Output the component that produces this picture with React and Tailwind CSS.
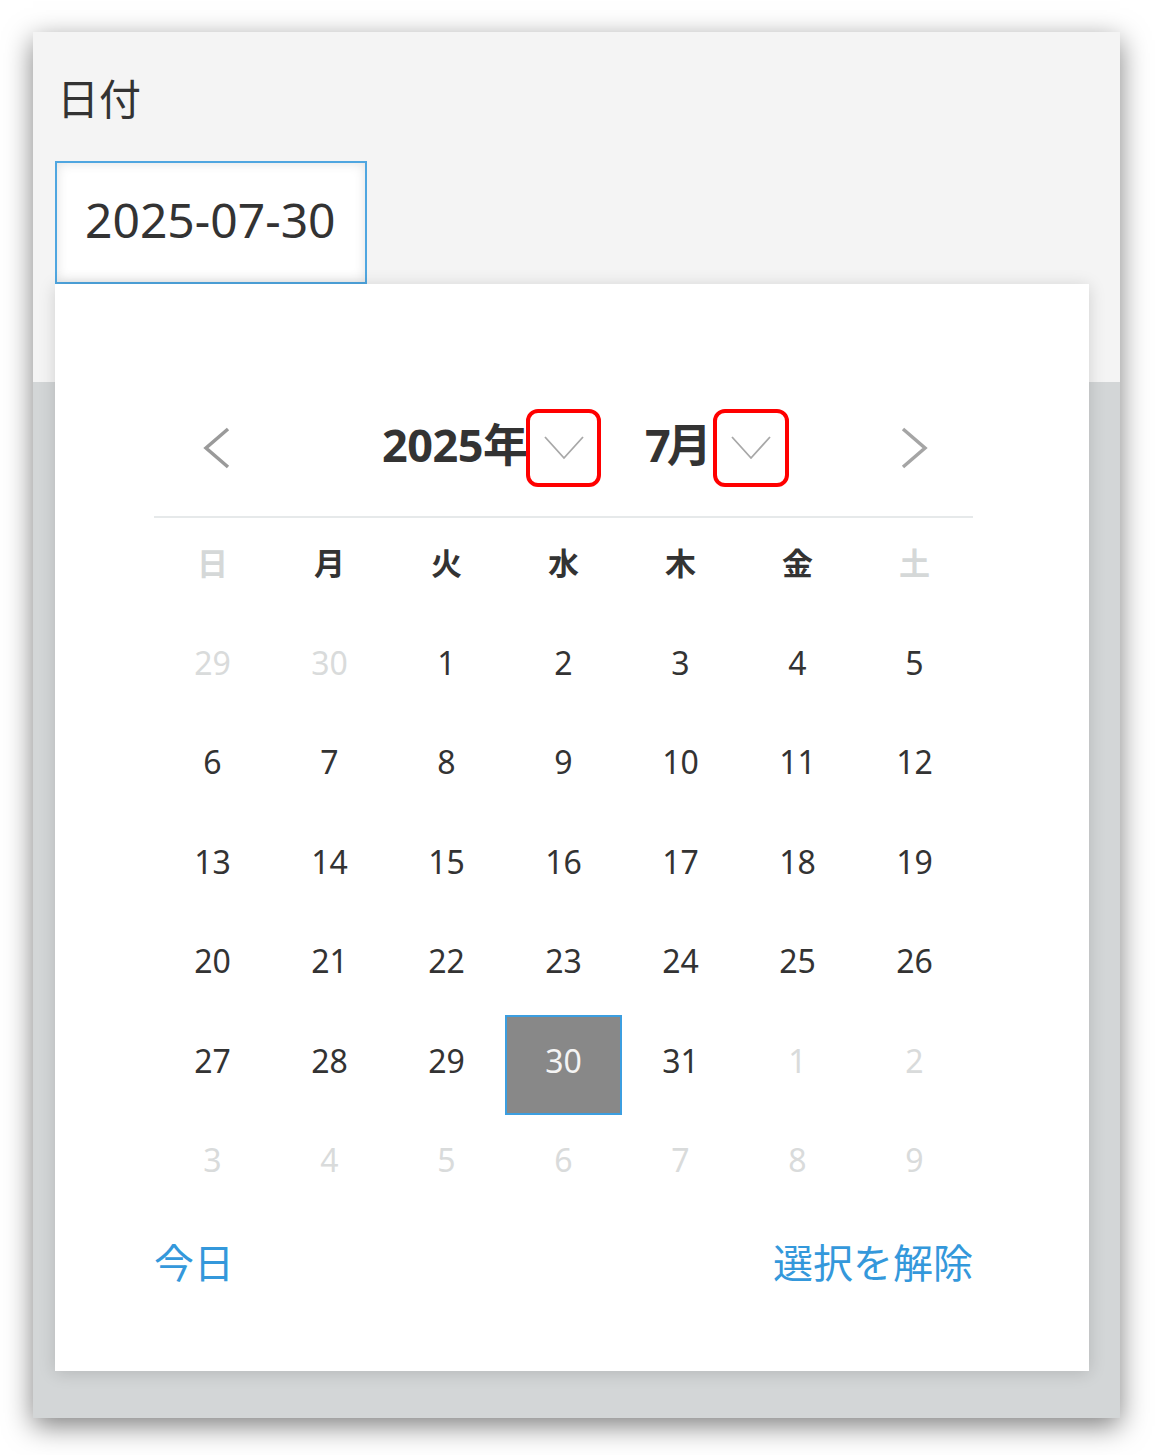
import React from "react";

const weeks = [
  [[29, 1], [30, 1], [1], [2], [3], [4], [5]],
  [[6], [7], [8], [9], [10], [11], [12]],
  [[13], [14], [15], [16], [17], [18], [19]],
  [[20], [21], [22], [23], [24], [25], [26]],
  [[27], [28], [29], [30, 0, 1], [31], [1, 1], [2, 1]],
  [[3, 1], [4, 1], [5, 1], [6, 1], [7, 1], [8, 1], [9, 1]],
];

const weekdays = [
  ["日", true],
  ["月", false],
  ["火", false],
  ["水", false],
  ["木", false],
  ["金", false],
  ["土", true],
];

function Chevron() {
  return (
    <svg width="40" height="26" viewBox="0 0 40 26" className="block">
      <polyline points="1,2 20,23 39,2" fill="none" stroke="#a8a8a8" strokeWidth="1.8" />
    </svg>
  );
}

function RedBox({ w }) {
  return (
    <div className={`${w} h-[78px] border-[4px] border-[#ff0000] rounded-[12px] flex items-center justify-center`}>
      <Chevron />
    </div>
  );
}

export default function App() {
  return (
    <div className="w-[1155px] h-[1455px] bg-white pt-[32px] pl-[33px] font-['Noto_Sans','Noto_Sans_CJK_JP',sans-serif]">
      <div className="relative w-[1087px] h-[1386px] flex flex-col shadow-[0_8px_26px_rgba(0,0,0,0.5)]">
        <div className="h-[350px] bg-[#f4f4f4]">
          <div className="mt-[47px] ml-[24px] h-[40px] leading-[40px] text-[42px] text-[#333]">日付</div>
          <div className="mt-[42px] ml-[22px] w-[312px] h-[123px] border-2 border-[#4fa6e0] bg-white flex items-center pl-[28px] pb-[6px] text-[48px] text-[#333] shadow-[inset_0_0_12px_rgba(0,0,0,0.12)]">
            2025-07-30
          </div>
        </div>
        <div className="flex-1 bg-[#d3d6d7]" />

        <div className="absolute left-[22px] top-[252px] w-[1034px] h-[1087px] bg-white shadow-[0_2px_16px_rgba(0,0,0,0.15)] pt-[125px] pl-[99px] pr-[116px] flex flex-col">
          <div className="flex items-center h-[78px]">
            <svg width="28" height="42" viewBox="0 0 28 42" className="ml-[49px] block">
              <polyline points="25,2 3,21 25,40" fill="none" stroke="#9a9a9a" strokeWidth="3.5" />
            </svg>
            <div className="ml-[151px] w-[144px] text-right text-[45px] font-bold text-[#333] leading-none whitespace-nowrap pb-[8px] tracking-[-0.5px]">
              2025年
            </div>
            <RedBox w="w-[75px]" />
            <div className="ml-[44px] w-[68px] text-left text-[45px] font-bold text-[#333] leading-none whitespace-nowrap pb-[8px] tracking-[-4px]">
              7月
            </div>
            <RedBox w="w-[76px]" />
            <svg width="28" height="42" viewBox="0 0 28 42" className="ml-[111px] block">
              <polyline points="3,2 25,21 3,40" fill="none" stroke="#a5a5a5" strokeWidth="3.5" />
            </svg>
          </div>

          <div className="mt-[29px] h-[2px] bg-[#e6e9ea]" />

          <div className="grid grid-cols-7">
            {weekdays.map(([d, muted]) => (
              <div
                key={d}
                className={`h-[99px] flex items-center justify-center pb-[8px] text-[31px] font-bold ${muted ? "text-[#d5d8d8]" : "text-[#333]"}`}
              >
                {d}
              </div>
            ))}
          </div>

          <div className="grid grid-cols-7">
            {weeks.flat().map(([n, other, sel], i) => (
              <div key={i} className="h-[99.5px] flex items-center justify-center">
                {sel ? (
                  <div className="w-full h-[99.5px] bg-[#888888] border-2 border-[#3c9ee0] flex items-center justify-center pb-[8px] text-[32px] text-[#f4f4f4]">
                    {n}
                  </div>
                ) : (
                  <div className={`pb-[8px] text-[32px] ${other ? "text-[#d9dbdb]" : "text-[#333]"}`}>{n}</div>
                )}
              </div>
            ))}
          </div>

          <div className="h-[98px] flex items-center justify-between text-[40px] text-[#3498db]">
            <span>今日</span>
            <span>選択を解除</span>
          </div>
        </div>
      </div>
    </div>
  );
}
